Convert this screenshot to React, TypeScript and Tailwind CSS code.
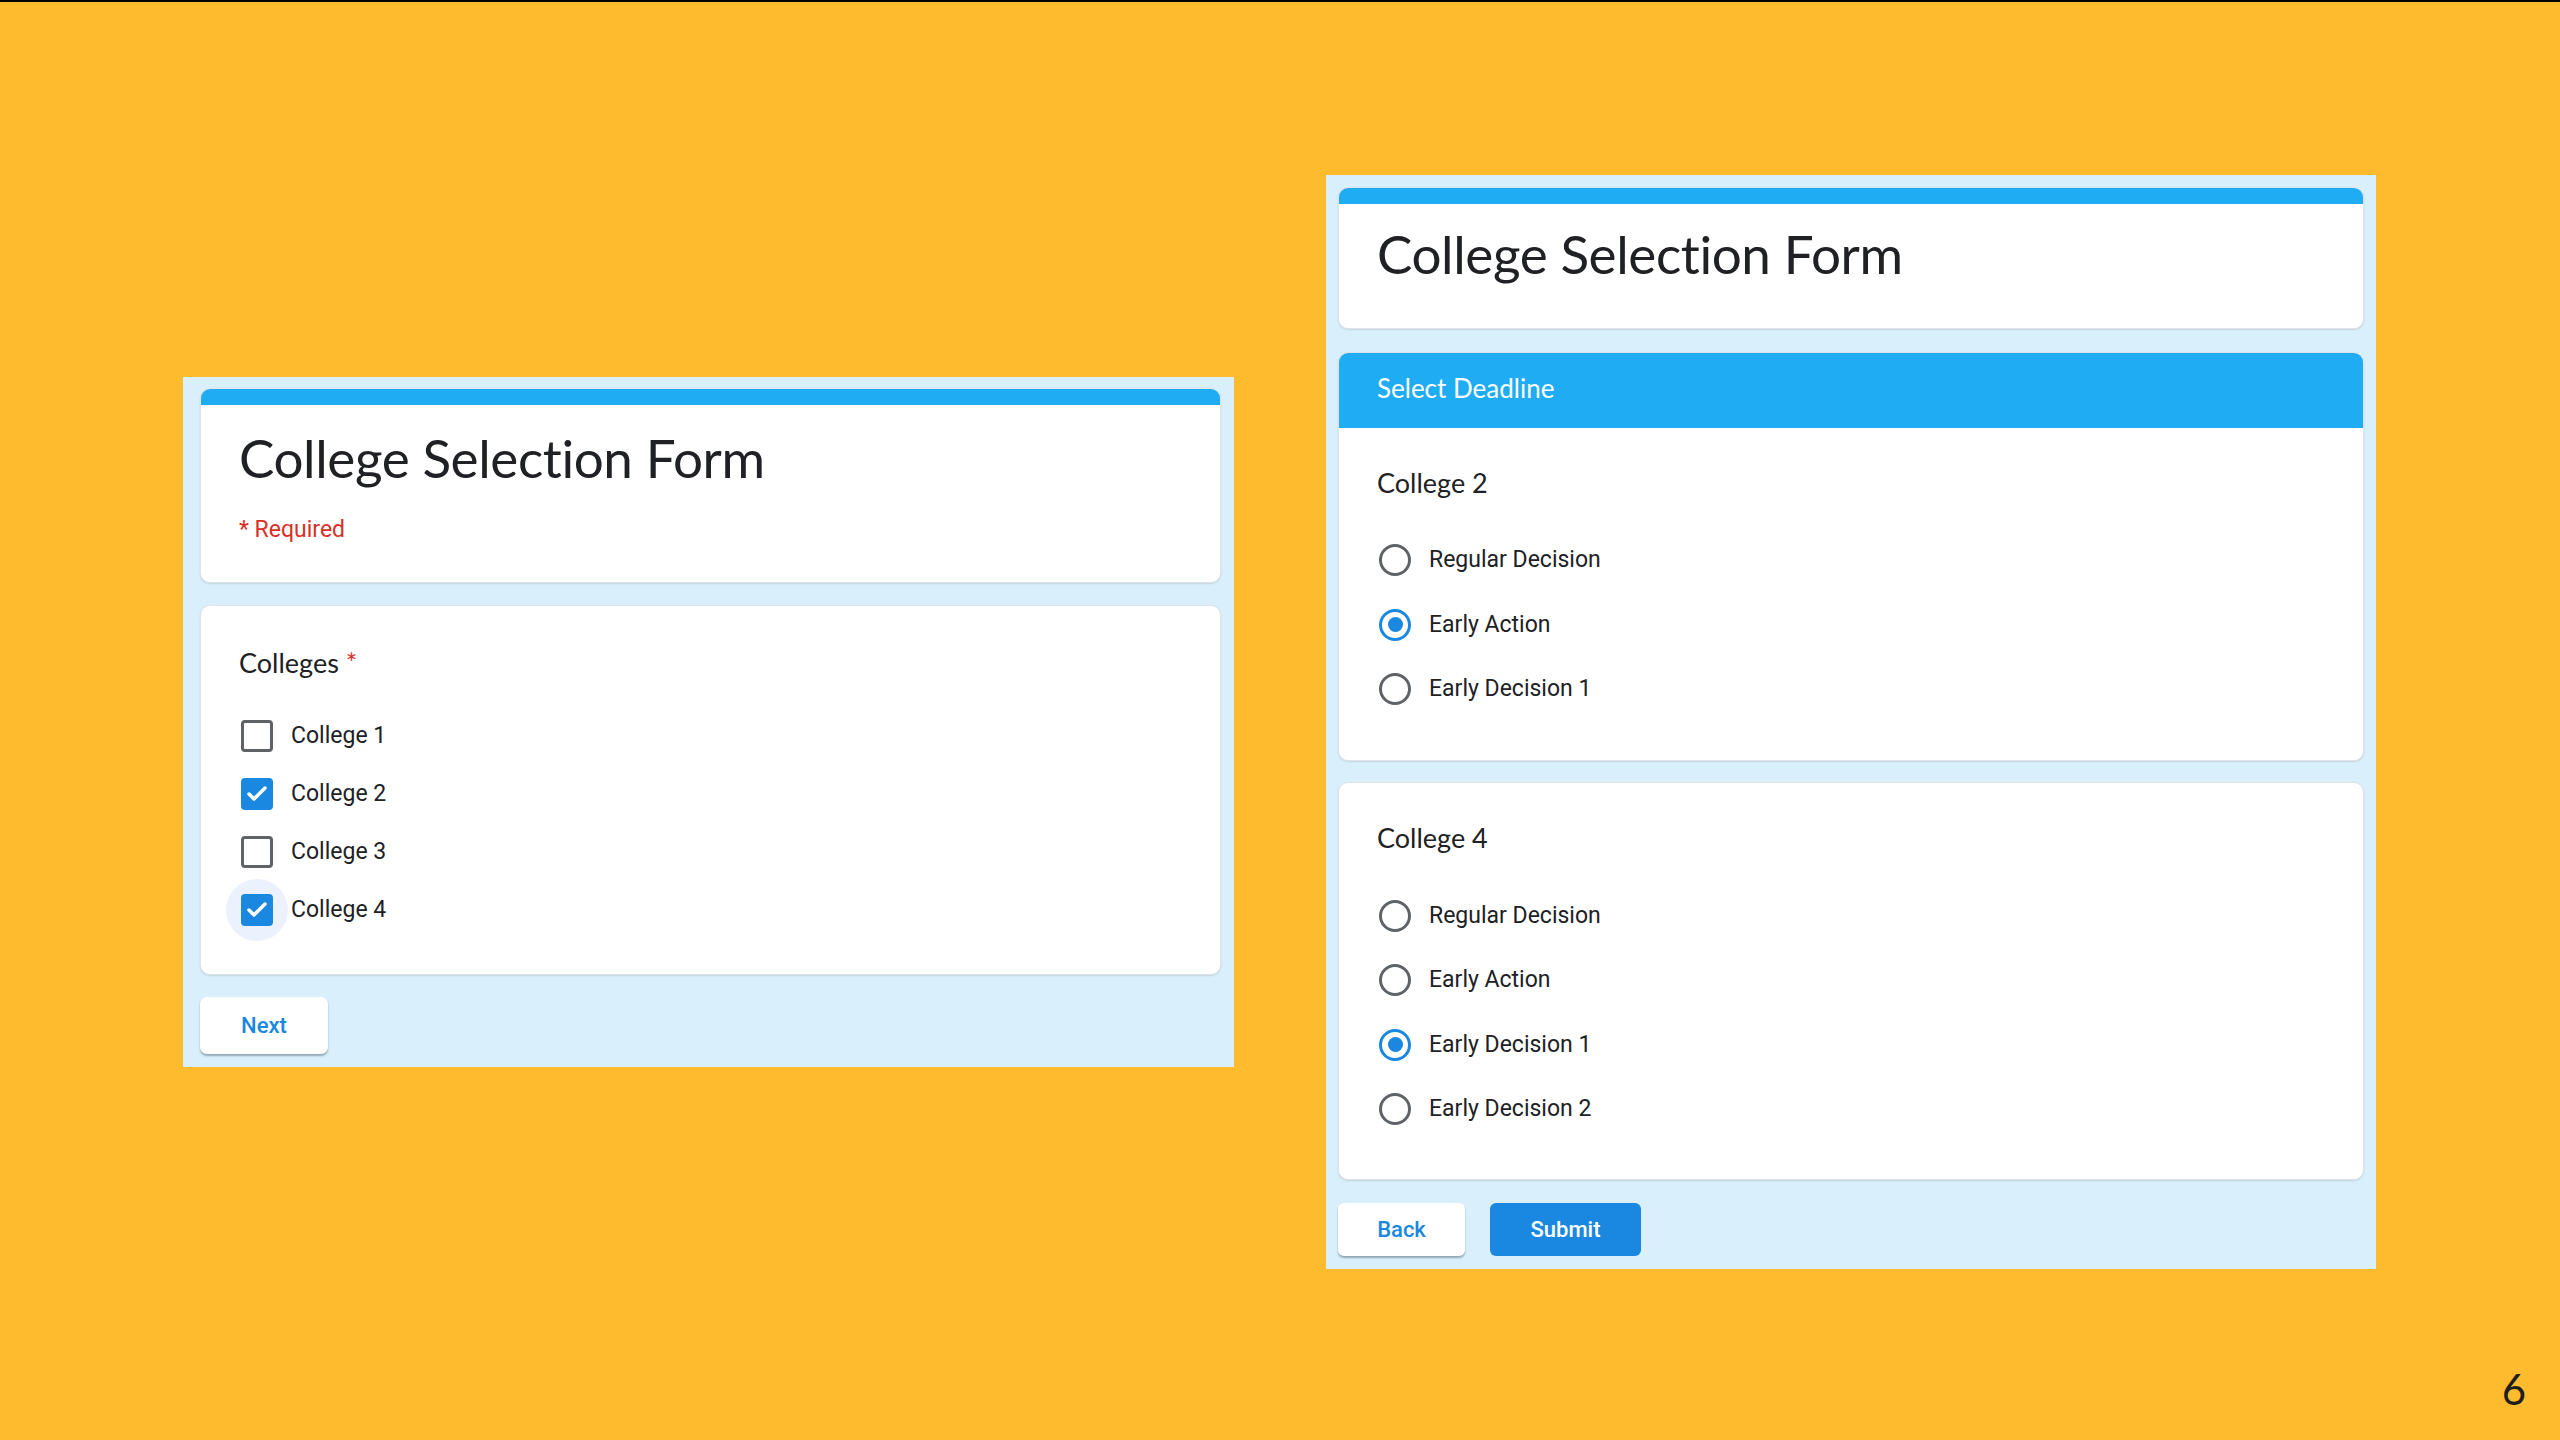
import { Check } from "lucide-react"

const sans = "font-['Lato','Noto_Sans',sans-serif]"
const body = "font-['Roboto','Liberation_Sans',sans-serif]"

function Card({ children, className = "" }: { children: React.ReactNode; className?: string }) {
  return (
    <div
      className={`bg-white rounded-[10px] border border-[#dfe3e6] shadow-[0_1px_2px_rgba(0,0,0,0.12)] overflow-hidden ${className}`}
    >
      {children}
    </div>
  )
}

function Checkbox({ label, checked, focus }: { label: string; checked?: boolean; focus?: boolean }) {
  return (
    <div className="h-[58px] flex items-center">
      <div className="relative w-[32px] h-[32px] ml-[2px] shrink-0">
        {focus && <div className="absolute -inset-[15px] rounded-full bg-[#ecf2fd]" />}
        {checked ? (
          <div className="relative w-full h-full rounded-[4px] bg-[#1a87e0] flex items-center justify-center">
            <Check className="w-[24px] h-[24px] text-white" strokeWidth={3.5} />
          </div>
        ) : (
          <div className="relative w-full h-full rounded-[4px] border-[3px] border-[#5f6368]" />
        )}
      </div>
      <span className={`${body} ml-[18px] text-[23px] text-[#202124]`}>{label}</span>
    </div>
  )
}

function Radio({ label, checked }: { label: string; checked?: boolean }) {
  return (
    <div className="h-[64.5px] flex items-center">
      <div
        className={`w-[32px] h-[32px] ml-[2px] rounded-full border-[3px] flex items-center justify-center shrink-0 ${
          checked ? "border-[#1a87e0]" : "border-[#5f6368]"
        }`}
      >
        {checked && <div className="w-[15px] h-[15px] rounded-full bg-[#1a87e0]" />}
      </div>
      <span className={`${body} ml-[18px] text-[23px] text-[#202124]`}>{label}</span>
    </div>
  )
}

export default function App() {
  return (
    <div className="w-[2560px] h-[1440px] bg-[#febb2e] border-t-2 border-black relative overflow-hidden">
      <div className="flex items-start pl-[183px] pt-[173px] gap-[92px]">
        {/* page one */}
        <div className="w-[1051px] mt-[202px] bg-[#d9f0fc] pt-[11px] pb-[13px] pl-[17px] pr-[13px] flex flex-col">
          <Card>
            <div className="h-[16px] bg-[#20acf2]" />
            <div className="pl-[38px] pt-[21px] pb-[38px]">
              <h1 className={`${sans} text-[53px] tracking-[-0.4px] leading-[64px] text-[#202124]`}>
                College Selection Form
              </h1>
              <p className={`${body} mt-[26px] text-[23px] leading-[28px] text-[#d93025]`}>* Required</p>
            </div>
          </Card>

          <Card className="mt-[22px] pl-[38px] pt-[41px] pb-[35px]">
            <h2 className={`${sans} text-[27px] leading-[32px] text-[#202124]`}>
              Colleges <span className="text-[#d93025]">*</span>
            </h2>
            <div className="mt-[28px] flex flex-col">
              <Checkbox label="College 1" />
              <Checkbox label="College 2" checked />
              <Checkbox label="College 3" />
              <Checkbox label="College 4" checked focus />
            </div>
          </Card>

          <div className="mt-[22px]">
            <button
              className={`${body} w-[128px] h-[57px] bg-white rounded-[7px] shadow-[0_2px_2px_rgba(60,80,90,0.45)] text-[22px] font-medium text-[#1a87e0]`}
            >
              Next
            </button>
          </div>
        </div>

        {/* page two */}
        <div className="w-[1050px] bg-[#d9f0fc] pt-[12px] pb-[13px] px-[12px] flex flex-col">
          <Card>
            <div className="h-[16px] bg-[#20acf2]" />
            <div className="pl-[38px] pt-[18px] pb-[42px]">
              <h1 className={`${sans} text-[53px] tracking-[-0.4px] leading-[64px] text-[#202124]`}>
                College Selection Form
              </h1>
            </div>
          </Card>

          <Card className="mt-[23px]">
            <div className="bg-[#20acf2] h-[75px] pl-[38px] pb-[5px] flex items-center">
              <span className={`${sans} text-[26px] text-white`}>Select Deadline</span>
            </div>
            <div className="pl-[38px] pt-[39px] pb-[38px]">
              <h2 className={`${sans} text-[27px] leading-[32px] text-[#202124]`}>College 2</h2>
              <div className="mt-[29px] flex flex-col">
                <Radio label="Regular Decision" />
                <Radio label="Early Action" checked />
                <Radio label="Early Decision 1" />
              </div>
            </div>
          </Card>

          <Card className="mt-[21px] pl-[38px] pt-[39px] pb-[37px]">
            <h2 className={`${sans} text-[27px] leading-[32px] text-[#202124]`}>College 4</h2>
            <div className="mt-[30px] flex flex-col">
              <Radio label="Regular Decision" />
              <Radio label="Early Action" />
              <Radio label="Early Decision 1" checked />
              <Radio label="Early Decision 2" />
            </div>
          </Card>

          <div className="mt-[23px] flex gap-[25px]">
            <button
              className={`${body} w-[127px] h-[53px] bg-white rounded-[6px] shadow-[0_2px_2px_rgba(60,80,90,0.45)] text-[22px] font-medium text-[#1a87e0]`}
            >
              Back
            </button>
            <button
              className={`${body} w-[151px] h-[53px] bg-[#1a87e0] rounded-[6px] text-[22px] font-medium text-white`}
            >
              Submit
            </button>
          </div>
        </div>
      </div>

      <span className={`${sans} absolute right-[34px] bottom-[30px] text-[42px] leading-none text-[#1f1f1f]`}>6</span>
    </div>
  )
}
